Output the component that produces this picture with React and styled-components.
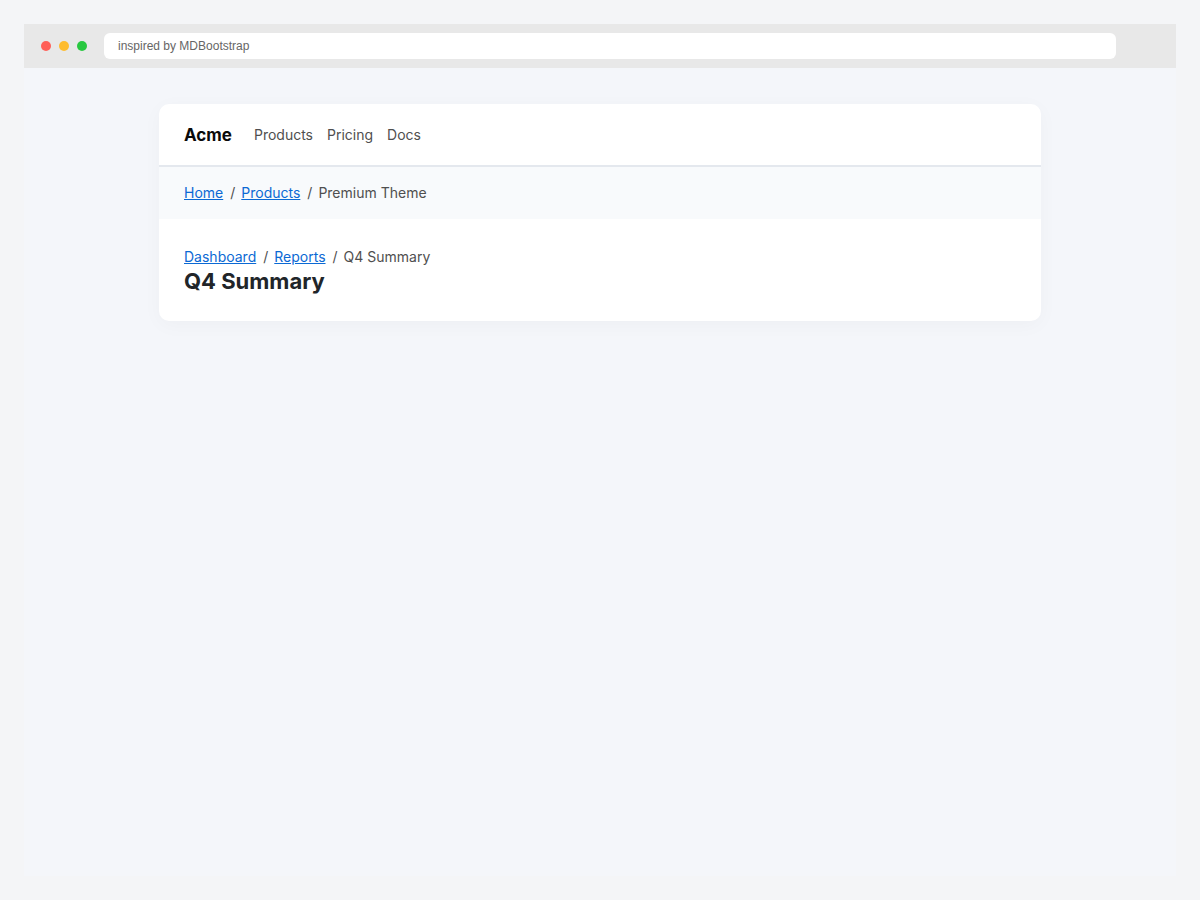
import React from 'react';
import styled, { createGlobalStyle } from 'styled-components';

const mainLinks = ['Products', 'Pricing', 'Docs'];

function Breadcrumb({ label, parents, current }) {
	return (
		<nav aria-label={label}>
			<Crumbs>
				{parents.map((name) => (
					<li key={name}>
						<a href="#">{name}</a>
					</li>
				))}
				<li aria-current="page">{current}</li>
			</Crumbs>
		</nav>
	);
}

function App() {
	return (
		<>
			<GlobalStyle />
			<Browser>
				<TitleBar>
					<Dots>
						<Dot $color="#ff5f57" />
						<Dot $color="#febc2e" />
						<Dot $color="#28c840" />
					</Dots>
					<Address type="text" aria-label="Address" defaultValue="inspired by MDBootstrap" />
				</TitleBar>
				<Viewport>
					<Card>
						<Navbar>
							<Brand href="#">Acme</Brand>
							{mainLinks.map((name) => (
								<NavLink href="#" key={name}>
									{name}
								</NavLink>
							))}
						</Navbar>
						<SubBar>
							<Breadcrumb label="Section" parents={['Home', 'Products']} current="Premium Theme" />
						</SubBar>
						<PageHeader>
							<Breadcrumb label="Report" parents={['Dashboard', 'Reports']} current="Q4 Summary" />
							<Title>Q4 Summary</Title>
						</PageHeader>
					</Card>
				</Viewport>
			</Browser>
		</>
	);
}

const GlobalStyle = createGlobalStyle`
	* {
		box-sizing: border-box;
	}

	body {
		margin: 0;
		background: #f4f5f7;
		color: #4f4f4f;
		font-family: Inter, sans-serif;
		font-size: 14px;
		line-height: 24px;
	}
`;

const Browser = styled.div`
	display: flex;
	flex-direction: column;
	min-height: 100vh;
	padding: 24px;
`;

const TitleBar = styled.header`
	display: flex;
	align-items: center;
	gap: 17px;
	height: 44px;
	padding: 0 60px 0 17px;
	background: #e8e8e8;
`;

const Dots = styled.div`
	display: flex;
	gap: 8px;
`;

const Dot = styled.span`
	width: 10px;
	height: 10px;
	border-radius: 50%;
	background: ${(props) => props.$color};
`;

const Address = styled.input`
	flex: 1;
	min-width: 0;
	height: 26px;
	padding: 0 14px;
	border: 0;
	border-radius: 6px;
	background: #fff;
	color: #666;
	font-family: 'Liberation Sans', Arial, sans-serif;
	font-size: 12px;
`;

const Viewport = styled.main`
	flex: 1;
	padding: 36px 24px;
	background: #f4f6fa;
`;

const Card = styled.section`
	max-width: 882px;
	margin: 0 auto;
	overflow: hidden;
	border-radius: 10px;
	background: #fff;
	box-shadow: 0 4px 20px rgba(0, 0, 0, 0.03);
`;

const Navbar = styled.nav`
	display: flex;
	align-items: center;
	gap: 14px;
	height: 63px;
	padding: 0 25px;
	border-bottom: 2px solid #e4e8ee;
`;

const Brand = styled.a`
	margin-right: 8px;
	color: #0a0a0a;
	font-size: 17px;
	font-weight: 700;
	text-decoration: none;
`;

const NavLink = styled.a`
	color: #4f4f4f;
	text-decoration: none;
`;

const SubBar = styled.div`
	padding: 14px 25px;
	background: #f8fafc;
`;

const PageHeader = styled.div`
	padding: 26px 25px 28px;
`;

const Crumbs = styled.ol`
	display: flex;
	flex-wrap: wrap;
	margin: 0;
	padding: 0;
	list-style: none;

	a {
		color: #0b69d4;
	}

	li + li::before {
		content: '/';
		padding: 0 6px 0 7px;
	}
`;

const Title = styled.h1`
	margin: 0;
	color: #212529;
	font-size: 22px;
	line-height: 24px;
	font-weight: 700;
`;

export default App;
